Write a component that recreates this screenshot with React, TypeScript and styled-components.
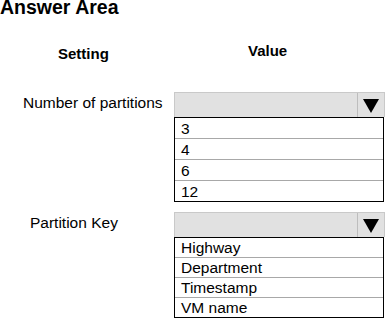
import React from 'react';
import styled, { createGlobalStyle } from 'styled-components';

const GlobalStyle = createGlobalStyle`
  html, body {
    margin: 0;
    padding: 0;
    background: #ffffff;
  }
  body {
    font-family: "Liberation Sans", Arial, sans-serif;
    color: #000000;
  }
`;

const Page = styled.div`
  width: 385px;
  height: 320px;
  overflow: hidden;
`;

const Title = styled.h1`
  margin: -2px 0 0 0;
  font-size: 19.5px;
  line-height: 19px;
  font-weight: 700;
`;

const ColumnHeads = styled.div`
  display: grid;
  grid-template-columns: 174px 210px;
  margin-top: 22px;
  height: 38px;
`;

const ColumnHead = styled.div<{ $indent: number; $top: number }>`
  padding-left: ${(p) => p.$indent}px;
  padding-top: ${(p) => p.$top}px;
  font-size: 15px;
  line-height: 17px;
  font-weight: 700;
`;

const SettingRow = styled.div<{ $gap: number }>`
  display: grid;
  grid-template-columns: 174px 210px;
  align-items: start;
  margin-top: ${(p) => p.$gap}px;
`;

const Label = styled.div<{ $indent: number }>`
  padding-left: ${(p) => p.$indent}px;
  padding-top: 2px;
  font-size: 15.5px;
  line-height: 17px;
`;

const Dropdown = styled.div`
  display: flex;
  flex-direction: column;
`;

const SelectBar = styled.div`
  display: flex;
  height: 25px;
  width: 211px;
  box-sizing: border-box;
  border: 1px solid #c9c9c9;
  border-bottom: none;
  background: #e1e1e1;
`;

const SelectField = styled.div`
  flex: 1;
`;

const ArrowCell = styled.div`
  width: 27px;
  border-left: 1px solid #bdbdbd;
  display: flex;
  align-items: center;
  justify-content: center;
  padding-top: 2px;
  box-sizing: border-box;
`;

const OptionList = styled.ul`
  list-style: none;
  margin: 0;
  padding: 0;
  width: 210px;
  box-sizing: border-box;
  border: 1px solid #000000;
`;

const Option = styled.li<{ $h: number }>`
  height: ${(p) => p.$h}px;
  line-height: ${(p) => p.$h}px;
  padding: 1px 0 0 6px;
  box-sizing: content-box;
  font-size: 15.5px;
  border-bottom: 1px solid #a8a8a8;

  &:last-child {
    border-bottom: none;
  }
`;

const DownArrow = () => (
  <svg width="16" height="14" viewBox="0 0 16 14">
    <path d="M0 0 H16 L8 14 Z" fill="#000000" />
  </svg>
);

type SettingProps = {
  label: string;
  indent: number;
  gap: number;
  rowHeight: number;
  options: string[];
};

const Setting: React.FC<SettingProps> = ({ label, indent, gap, rowHeight, options }) => (
  <SettingRow $gap={gap}>
    <Label $indent={indent}>{label}</Label>
    <Dropdown>
      <SelectBar>
        <SelectField />
        <ArrowCell>
          <DownArrow />
        </ArrowCell>
      </SelectBar>
      <OptionList>
        {options.map((o) => (
          <Option key={o} $h={rowHeight}>
            {o}
          </Option>
        ))}
      </OptionList>
    </Dropdown>
  </SettingRow>
);

export default function App() {
  return (
    <Page>
      <GlobalStyle />
      <Title>Answer Area</Title>
      <ColumnHeads>
        <ColumnHead $indent={58} $top={6}>Setting</ColumnHead>
        <ColumnHead $indent={74} $top={3}>Value</ColumnHead>
      </ColumnHeads>
      <Setting
        label="Number of partitions"
        indent={23}
        gap={15}
        rowHeight={19}
        options={['3', '4', '6', '12']}
      />
      <Setting
        label="Partition Key"
        indent={30}
        gap={10}
        rowHeight={18}
        options={['Highway', 'Department', 'Timestamp', 'VM name']}
      />
    </Page>
  );
}
